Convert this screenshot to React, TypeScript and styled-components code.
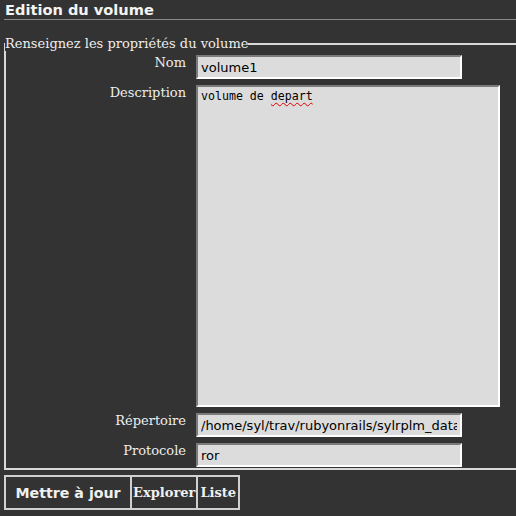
import * as React from 'react';
import styled, { createGlobalStyle } from 'styled-components';

const GlobalStyle = createGlobalStyle`
  html, body {
    margin: 0;
    padding: 0;
    background: #333333;
    overflow: hidden;
  }
  body {
    width: 516px;
    height: 516px;
    font-family: "DejaVu Serif", serif;
    color: #eeeeee;
  }
`;

const Page = styled('div')`
  padding: 0 0 0 4px;
  overflow: hidden;
  width: 512px;
`;

const Title = styled('h1')`
  margin: 0 -4px 0 0;
  padding: 2px 0 1px 1px;
  font-family: "DejaVu Sans", sans-serif;
  font-size: 14.6px;
  font-weight: bold;
  line-height: 16px;
  color: #f4f4f4;
  border-bottom: 1px solid #8a8a8a;
`;

const FieldSet = styled('fieldset')`
  margin: 16px 0 0 0;
  padding: 0 0 1px 0;
  width: 530px;
  border: 2px solid #d8d8d8;
  border-right: none;
  box-sizing: border-box;
`;

const Legend = styled('legend')`
  padding: 0;
  margin-left: -1px;
  font-family: "DejaVu Serif", serif;
  font-size: 13px;
  color: #eeeeee;
`;

const FormTable = styled('div')`
  display: grid;
  grid-template-columns: 180px auto;
  column-gap: 10px;
  row-gap: 6px;
  align-items: start;
  padding-top: 4px;
`;

const Label = styled('label')`
  text-align: right;
  font-family: "DejaVu Serif", serif;
  font-size: 13px;
  line-height: 15px;
  color: #eeeeee;
`;

const TextInput = styled('input')<{ $width: number }>`
  width: ${p => p.$width}px;
  height: 24px;
  box-sizing: border-box;
  margin: 0;
  padding: 1px 3px;
  background: #dcdcdc;
  color: #000;
  font-family: "DejaVu Sans", sans-serif;
  font-size: 13px;
  border: 2px solid;
  border-color: #7a7a7a #ffffff #ffffff #7a7a7a;
  outline: none;
`;

const Misspelled = styled('span')`
  text-decoration: underline wavy #e00000;
  text-decoration-thickness: 1px;
  text-underline-offset: 2px;
`;

const DescriptionBox = styled('div')`
  width: 304px;
  height: 322px;
  box-sizing: border-box;
  padding: 1px 3px;
  background: #dcdcdc;
  color: #000;
  font-family: "DejaVu Sans Mono", monospace;
  font-size: 11.6px;
  line-height: 16px;
  border: 2px solid;
  border-color: #7a7a7a #ffffff #ffffff #7a7a7a;
`;

const ButtonBar = styled('div')`
  display: flex;
  margin-top: 5px;
`;

const Button = styled('button')<{ $serif?: boolean; $pad: number }>`
  height: 35px;
  box-sizing: border-box;
  margin: 0;
  padding: 0 ${p => p.$pad}px;
  background: #333333;
  color: #f0f0f0;
  border: 2px solid #d0d0d0;
  font-family: ${p => (p.$serif ? '"DejaVu Serif", serif' : '"DejaVu Sans", sans-serif')};
  font-size: ${p => (p.$serif ? 13 : 14.2)}px;
  font-weight: bold;
  & + & {
    border-left: none;
  }
`;

const App = () => {
  return (
    <>
      <GlobalStyle />
      <Page>
        <Title>Edition du volume</Title>
        <FieldSet>
          <Legend>Renseignez les propriétés du volume</Legend>
          <FormTable>
            <Label>Nom</Label>
            <TextInput $width={266} defaultValue="volume1" />
            <Label>Description</Label>
            <DescriptionBox>
              volume de <Misspelled>depart</Misspelled>
            </DescriptionBox>
            <Label>Répertoire</Label>
            <TextInput $width={266} defaultValue="/home/syl/trav/rubyonrails/sylrplm_data" />
            <Label>Protocole</Label>
            <TextInput $width={266} defaultValue="ror" />
          </FormTable>
        </FieldSet>
        <ButtonBar>
          <Button $pad={9.5}>Mettre à jour</Button>
          <Button $serif $pad={1}>Explorer</Button>
          <Button $serif $pad={2}>Liste</Button>
        </ButtonBar>
      </Page>
    </>
  );
};

export default App;
